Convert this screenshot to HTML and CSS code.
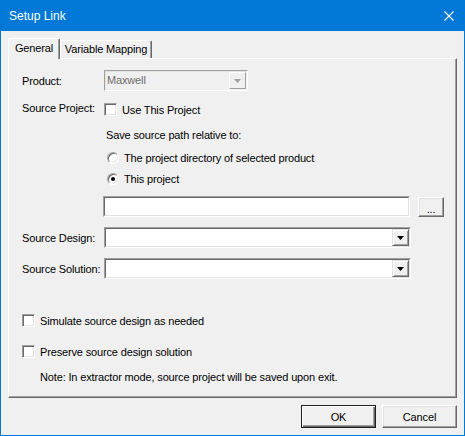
FILE: index.html
```html
<!DOCTYPE html>
<html>
<head>
<meta charset="utf-8">
<link rel="stylesheet" href="styles.css">
</head>
<body>
<div class="window">
  <div class="titlebar">
    <span class="title">Setup Link</span>
    <svg class="close" width="10" height="10" viewBox="0 0 10 10"><path d="M0.5 0.5 L9.5 9.5 M9.5 0.5 L0.5 9.5" stroke="#fff" stroke-width="1.1" fill="none"/></svg>
  </div>
  <div class="client">
    <div class="tabs">
      <div class="tab active">General</div>
      <div class="tab">Variable Mapping</div>
    </div>
    <div class="panel">
      <div class="row r-field">
        <span class="lbl">Product:</span>
        <div class="sunken combo-product">
          <div class="sunken-in disabled">
            <span class="value">Maxwell</span>
            <div class="dropbtn dis"><svg width="7" height="4" viewBox="0 0 7 4"><path d="M0 0H7L3.5 4Z" fill="#a0a0a0"/></svg></div>
          </div>
        </div>
      </div>
      <div class="row r-check r-srcproj">
        <span class="lbl lbl-up">Source Project:</span>
        <span class="chk"></span><span class="ctext">Use This Project</span>
      </div>
      <div class="row r-check r-save">
        <span>Save source path relative to:</span>
      </div>
      <div class="row r-radio r-radio1">
        <span class="radio"></span><span class="rtext">The project directory of selected product</span>
      </div>
      <div class="row r-radio r-radio2">
        <span class="radio"><span class="dot"></span></span><span class="rtext">This project</span>
      </div>
      <div class="row r-field r-path">
        <div class="sunken field-path"><div class="sunken-in"></div></div>
        <div class="btn browse">...</div>
      </div>
      <div class="row r-field r-design">
        <span class="lbl">Source Design:</span>
        <div class="sunken combo-wide">
          <div class="sunken-in">
            <span class="value"></span>
            <div class="dropbtn"><svg width="7" height="4" viewBox="0 0 7 4"><path d="M0 0H7L3.5 4Z" fill="#000"/></svg></div>
          </div>
        </div>
      </div>
      <div class="row r-field r-solution">
        <span class="lbl">Source Solution:</span>
        <div class="sunken combo-wide">
          <div class="sunken-in">
            <span class="value"></span>
            <div class="dropbtn"><svg width="7" height="4" viewBox="0 0 7 4"><path d="M0 0H7L3.5 4Z" fill="#000"/></svg></div>
          </div>
        </div>
      </div>
      <div class="row r-check r-simulate">
        <span class="chk"></span><span class="ctext">Simulate source design as needed</span>
      </div>
      <div class="row r-check r-preserve">
        <span class="chk"></span><span class="ctext">Preserve source design solution</span>
      </div>
      <div class="row r-check r-note">
        <span>Note: In extractor mode, source project will be saved upon exit.</span>
      </div>
    </div>
    <div class="buttons">
      <div class="btn dlg default">OK</div>
      <div class="btn dlg">Cancel</div>
    </div>
  </div>
</div>
</body>
</html>
```
FILE: styles.css
```css
* { box-sizing: border-box; }
html, body { margin: 0; padding: 0; }
body {
  width: 465px; height: 436px; overflow: hidden;
  font-family: "Liberation Sans", Arial, sans-serif;
  font-size: 11px; letter-spacing: -0.15px; color: #000; background: #f0f0f0;
}
.window {
  width: 465px; height: 436px;
  border: 1px solid #0078d7;
  display: flex; flex-direction: column;
  background: #f0f0f0;
}
.titlebar {
  flex: none; height: 30px; background: #0078d7; color: #fff;
  display: flex; align-items: center; justify-content: space-between;
  padding: 0 10px 0 8px; font-size: 12px; letter-spacing: 0;
}
.title { line-height: 16px; }
.close { display: block; }
.client { flex: 1; padding: 7px 7px 0 7px; display: flex; flex-direction: column; }
.tabs { display: flex; align-items: flex-end; height: 20px; flex: none; }
.tab {
  height: 18px; width: 92px; text-align: center; line-height: 17px;
  border-top: 1px solid #fff; border-left: 1px solid #fff; border-right: 1px solid #696969;
  box-shadow: inset -1px 0 #a0a0a0;
  border-radius: 2px 2px 0 0; background: #f0f0f0;
}
.tab.active {
  width: 52px; height: 21px; margin-bottom: -1px; line-height: 19px;
  position: relative; z-index: 1;
}
.panel {
  width: 449px; height: 340px; flex: none;
  border: 1px solid; border-color: #fff #696969 #696969 #fff;
  box-shadow: inset -1px -1px #a0a0a0;
  padding: 11px 0 0 13px;
}
.row { display: flex; align-items: center; }
.r-field { height: 21px; }
.r-check { height: 15px; }
.r-radio { height: 14px; padding-left: 85px; }
.lbl { width: 82px; flex: none; white-space: nowrap; }
.lbl-up { margin-top: -3px; }
.r-srcproj { margin-top: 11px; }
.r-save { margin-top: 10px; padding-left: 84px; }
.r-radio1 { margin-top: 9px; }
.r-radio2 { margin-top: 7px; }
.r-path { margin-top: 10px; padding-left: 81px; align-items: flex-start; }
.r-design { margin-top: 10px; }
.r-solution { margin-top: 10px; }
.r-simulate { margin-top: 34px; }
.r-preserve { margin-top: 16px; }
.r-note { margin-top: 10px; padding-left: 18px; }

.sunken {
  height: 21px; border: 1px solid; border-color: #a0a0a0 #fff #fff #a0a0a0;
  flex: none;
}
.sunken-in {
  height: 100%; border: 1px solid; border-color: #696969 #e3e3e3 #e3e3e3 #696969;
  background: #fff; display: flex; align-items: center;
}
.sunken-in.disabled { background: #f0f0f0; border-color: #e3e3e3 #f0f0f0 #f0f0f0 #e3e3e3; }
.combo-product { width: 144px; }
.combo-wide { width: 307px; }
.field-path { width: 307px; }
.value { flex: 1; padding-left: 1px; color: #6d6d6d; line-height: 15px; }
.dropbtn {
  width: 17px; height: 17px; flex: none;
  border: 1px solid; border-color: #e3e3e3 #696969 #696969 #e3e3e3;
  box-shadow: inset 1px 1px #fff, inset -1px -1px #a0a0a0;
  background: #f0f0f0;
  display: flex; align-items: center; justify-content: center;
}
.dropbtn svg { display: block; margin-top: 1px; }
.dropbtn.dis { border-color: #fff #a0a0a0 #a0a0a0 #fff; box-shadow: none; }

.chk {
  width: 13px; height: 13px; flex: none;
  border: 1px solid; border-color: #a0a0a0 #fff #fff #a0a0a0;
  box-shadow: inset 1px 1px #696969, inset -1px -1px #e3e3e3;
  background: #fff;
}
.ctext { margin-left: 5px; white-space: nowrap; }
.radio {
  width: 12px; height: 12px; flex: none; border-radius: 50%;
  border: 1px solid; border-color: #a0a0a0 #fff #fff #a0a0a0;
  box-shadow: inset 1px 1px #696969, inset -1px -1px #e3e3e3;
  background: #fff;
  display: flex; align-items: center; justify-content: center;
}
.dot { width: 4px; height: 4px; border-radius: 50%; background: #000; }
.rtext { margin-left: 5px; white-space: nowrap; }

.btn {
  border: 1px solid; border-color: #fff #696969 #696969 #fff;
  box-shadow: inset -1px -1px #a0a0a0, inset 1px 1px #e3e3e3;
  background: #f0f0f0;
  display: flex; align-items: center; justify-content: center;
  flex: none;
}
.browse { width: 26px; height: 20px; margin-left: 8px; margin-top: 1px; padding-top: 3px; }
.buttons { display: flex; justify-content: flex-end; gap: 6px; margin-top: 7px; }
.dlg { width: 75px; height: 23px; }
.btn.default {
  border-color: #1e1e1e;
  box-shadow: inset 1px 1px #fff, inset -1px -1px #696969, inset -2px -2px #a0a0a0;
}
```
